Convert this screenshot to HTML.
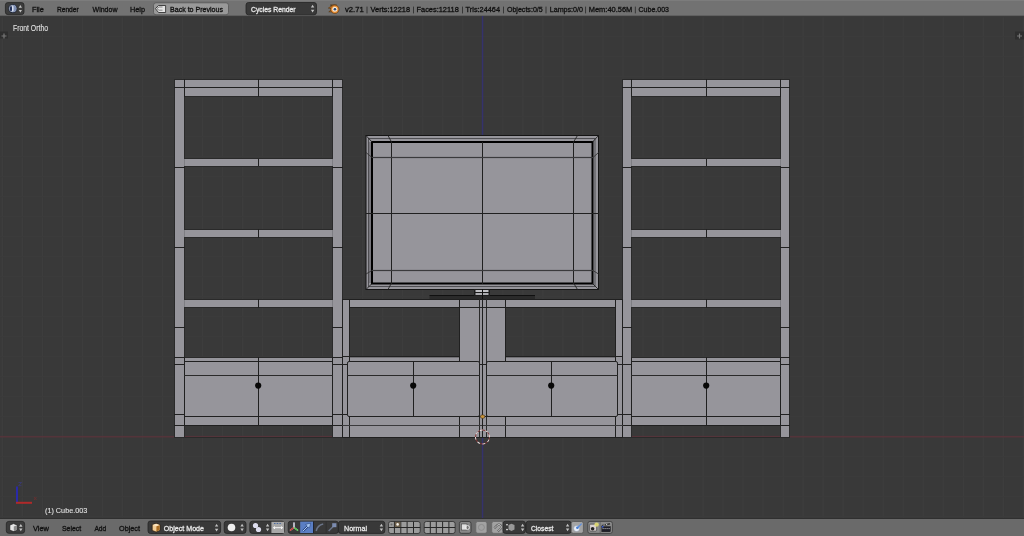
<!DOCTYPE html>
<html><head><meta charset="utf-8"><title>Blender</title>
<style>
html,body{margin:0;padding:0;background:#393939;}
body{width:1024px;height:536px;overflow:hidden;position:relative;}
svg{position:absolute;left:0;top:0;display:block;will-change:transform;}
text{font-family:"Liberation Sans",sans-serif;}
</style></head>
<body>
<svg width="1024" height="536" viewBox="0 0 1024 536">
<rect x="0" y="16" width="1024.00" height="503.00" fill="#393939" />
<rect x="1.62" y="16" width="1.40" height="503.00" fill="#3d3d3d" />
<rect x="21.64" y="16" width="1.40" height="503.00" fill="#3d3d3d" />
<rect x="41.66" y="16" width="1.40" height="503.00" fill="#3d3d3d" />
<rect x="61.68" y="16" width="1.40" height="503.00" fill="#3d3d3d" />
<rect x="81.7" y="16" width="1.40" height="503.00" fill="#3d3d3d" />
<rect x="101.72" y="16" width="1.40" height="503.00" fill="#3d3d3d" />
<rect x="121.74" y="16" width="1.40" height="503.00" fill="#3d3d3d" />
<rect x="141.76" y="16" width="1.40" height="503.00" fill="#3d3d3d" />
<rect x="161.78" y="16" width="1.40" height="503.00" fill="#3d3d3d" />
<rect x="181.8" y="16" width="1.40" height="503.00" fill="#3d3d3d" />
<rect x="201.82" y="16" width="1.40" height="503.00" fill="#3d3d3d" />
<rect x="221.84" y="16" width="1.40" height="503.00" fill="#3d3d3d" />
<rect x="241.86" y="16" width="1.40" height="503.00" fill="#3d3d3d" />
<rect x="261.88" y="16" width="1.40" height="503.00" fill="#3d3d3d" />
<rect x="281.9" y="16" width="1.40" height="503.00" fill="#3d3d3d" />
<rect x="301.92" y="16" width="1.40" height="503.00" fill="#3d3d3d" />
<rect x="321.94" y="16" width="1.40" height="503.00" fill="#3d3d3d" />
<rect x="341.96" y="16" width="1.40" height="503.00" fill="#3d3d3d" />
<rect x="361.98" y="16" width="1.40" height="503.00" fill="#3d3d3d" />
<rect x="382.0" y="16" width="1.40" height="503.00" fill="#3d3d3d" />
<rect x="402.02" y="16" width="1.40" height="503.00" fill="#3d3d3d" />
<rect x="422.04" y="16" width="1.40" height="503.00" fill="#3d3d3d" />
<rect x="442.06" y="16" width="1.40" height="503.00" fill="#3d3d3d" />
<rect x="462.08" y="16" width="1.40" height="503.00" fill="#3d3d3d" />
<rect x="502.12" y="16" width="1.40" height="503.00" fill="#3d3d3d" />
<rect x="522.14" y="16" width="1.40" height="503.00" fill="#3d3d3d" />
<rect x="542.16" y="16" width="1.40" height="503.00" fill="#3d3d3d" />
<rect x="562.18" y="16" width="1.40" height="503.00" fill="#3d3d3d" />
<rect x="582.2" y="16" width="1.40" height="503.00" fill="#3d3d3d" />
<rect x="602.22" y="16" width="1.40" height="503.00" fill="#3d3d3d" />
<rect x="622.24" y="16" width="1.40" height="503.00" fill="#3d3d3d" />
<rect x="642.26" y="16" width="1.40" height="503.00" fill="#3d3d3d" />
<rect x="662.28" y="16" width="1.40" height="503.00" fill="#3d3d3d" />
<rect x="682.3" y="16" width="1.40" height="503.00" fill="#3d3d3d" />
<rect x="702.32" y="16" width="1.40" height="503.00" fill="#3d3d3d" />
<rect x="722.34" y="16" width="1.40" height="503.00" fill="#3d3d3d" />
<rect x="742.36" y="16" width="1.40" height="503.00" fill="#3d3d3d" />
<rect x="762.38" y="16" width="1.40" height="503.00" fill="#3d3d3d" />
<rect x="782.4" y="16" width="1.40" height="503.00" fill="#3d3d3d" />
<rect x="802.42" y="16" width="1.40" height="503.00" fill="#3d3d3d" />
<rect x="822.44" y="16" width="1.40" height="503.00" fill="#3d3d3d" />
<rect x="842.46" y="16" width="1.40" height="503.00" fill="#3d3d3d" />
<rect x="862.48" y="16" width="1.40" height="503.00" fill="#3d3d3d" />
<rect x="882.5" y="16" width="1.40" height="503.00" fill="#3d3d3d" />
<rect x="902.52" y="16" width="1.40" height="503.00" fill="#3d3d3d" />
<rect x="922.54" y="16" width="1.40" height="503.00" fill="#3d3d3d" />
<rect x="942.56" y="16" width="1.40" height="503.00" fill="#3d3d3d" />
<rect x="962.58" y="16" width="1.40" height="503.00" fill="#3d3d3d" />
<rect x="982.6" y="16" width="1.40" height="503.00" fill="#3d3d3d" />
<rect x="1002.62" y="16" width="1.40" height="503.00" fill="#3d3d3d" />
<rect x="1022.64" y="16" width="1.40" height="503.00" fill="#3d3d3d" />
<rect x="0" y="516.0" width="1024.00" height="1.40" fill="#3b3b3b" />
<rect x="0" y="496.0" width="1024.00" height="1.40" fill="#3b3b3b" />
<rect x="0" y="476.0" width="1024.00" height="1.40" fill="#3b3b3b" />
<rect x="0" y="456.0" width="1024.00" height="1.40" fill="#3b3b3b" />
<rect x="0" y="416.0" width="1024.00" height="1.40" fill="#3b3b3b" />
<rect x="0" y="396.0" width="1024.00" height="1.40" fill="#3b3b3b" />
<rect x="0" y="376.0" width="1024.00" height="1.40" fill="#3b3b3b" />
<rect x="0" y="356.0" width="1024.00" height="1.40" fill="#3b3b3b" />
<rect x="0" y="336.0" width="1024.00" height="1.40" fill="#3b3b3b" />
<rect x="0" y="316.0" width="1024.00" height="1.40" fill="#3b3b3b" />
<rect x="0" y="296.0" width="1024.00" height="1.40" fill="#3b3b3b" />
<rect x="0" y="276.0" width="1024.00" height="1.40" fill="#3b3b3b" />
<rect x="0" y="256.0" width="1024.00" height="1.40" fill="#3b3b3b" />
<rect x="0" y="236.0" width="1024.00" height="1.40" fill="#3b3b3b" />
<rect x="0" y="216.0" width="1024.00" height="1.40" fill="#3b3b3b" />
<rect x="0" y="196.0" width="1024.00" height="1.40" fill="#3b3b3b" />
<rect x="0" y="176.0" width="1024.00" height="1.40" fill="#3b3b3b" />
<rect x="0" y="156.0" width="1024.00" height="1.40" fill="#3b3b3b" />
<rect x="0" y="136.0" width="1024.00" height="1.40" fill="#3b3b3b" />
<rect x="0" y="116.0" width="1024.00" height="1.40" fill="#3b3b3b" />
<rect x="0" y="96.0" width="1024.00" height="1.40" fill="#3b3b3b" />
<rect x="0" y="76.0" width="1024.00" height="1.40" fill="#3b3b3b" />
<rect x="0" y="56.0" width="1024.00" height="1.40" fill="#3b3b3b" />
<rect x="0" y="36.0" width="1024.00" height="1.40" fill="#3b3b3b" />
<rect x="0" y="16.0" width="1024.00" height="1.40" fill="#3b3b3b" />
<rect x="0" y="435.9" width="1024.00" height="1.60" fill="#54343a" />
<rect x="481.8" y="16" width="1.50" height="503.00" fill="#35326c" />
<rect x="174.5" y="79.5" width="10" height="358" fill="#96959b"/>
<rect x="332.5" y="79.5" width="10" height="358" fill="#96959b"/>
<rect x="184.5" y="79.5" width="148" height="17" fill="#96959b"/>
<rect x="184.5" y="158.5" width="148" height="8" fill="#96959b"/>
<rect x="184.5" y="229.5" width="148" height="8" fill="#96959b"/>
<rect x="184.5" y="299.5" width="148" height="8" fill="#96959b"/>
<rect x="184.5" y="357.5" width="148" height="68" fill="#96959b"/>
<rect x="174.0" y="79" width="1.0" height="359" fill="#2a2a2a"/>
<rect x="342.0" y="79" width="1.0" height="359" fill="#2a2a2a"/>
<rect x="184.0" y="96" width="1.0" height="63" fill="#2a2a2a"/>
<rect x="332.0" y="96" width="1.0" height="63" fill="#2a2a2a"/>
<rect x="184" y="96.0" width="149" height="1.0" fill="#2a2a2a"/>
<rect x="184" y="158.0" width="149" height="1.0" fill="#2a2a2a"/>
<rect x="184.0" y="166" width="1.0" height="64" fill="#2a2a2a"/>
<rect x="332.0" y="166" width="1.0" height="64" fill="#2a2a2a"/>
<rect x="184" y="166.0" width="149" height="1.0" fill="#2a2a2a"/>
<rect x="184" y="229.0" width="149" height="1.0" fill="#2a2a2a"/>
<rect x="184.0" y="237" width="1.0" height="63" fill="#2a2a2a"/>
<rect x="332.0" y="237" width="1.0" height="63" fill="#2a2a2a"/>
<rect x="184" y="237.0" width="149" height="1.0" fill="#2a2a2a"/>
<rect x="184" y="299.0" width="149" height="1.0" fill="#2a2a2a"/>
<rect x="184.0" y="307" width="1.0" height="51" fill="#2a2a2a"/>
<rect x="332.0" y="307" width="1.0" height="51" fill="#2a2a2a"/>
<rect x="184" y="307.0" width="149" height="1.0" fill="#2a2a2a"/>
<rect x="184" y="357.0" width="149" height="1.0" fill="#2a2a2a"/>
<rect x="184.0" y="425" width="1.0" height="13" fill="#2a2a2a"/>
<rect x="332.0" y="425" width="1.0" height="13" fill="#2a2a2a"/>
<rect x="184" y="425.0" width="149" height="1.0" fill="#2a2a2a"/>
<rect x="184" y="437.0" width="149" height="1.0" fill="#2a2a2a"/>
<rect x="174" y="79.0" width="169" height="1.0" fill="#2a2a2a"/>
<rect x="174" y="437.0" width="11" height="1.0" fill="#2a2a2a"/>
<rect x="332" y="437.0" width="11" height="1.0" fill="#2a2a2a"/>
<rect x="174" y="87.0" width="169" height="1.0" fill="#202020"/>
<rect x="184.0" y="79" width="1.0" height="18" fill="#202020"/>
<rect x="332.0" y="79" width="1.0" height="18" fill="#202020"/>
<rect x="258.0" y="79" width="1.0" height="18" fill="#202020"/>
<rect x="258.0" y="158" width="1.0" height="9" fill="#202020"/>
<rect x="258.0" y="229" width="1.0" height="9" fill="#202020"/>
<rect x="258.0" y="299" width="1.0" height="9" fill="#202020"/>
<rect x="184" y="158.0" width="149" height="1.0" fill="#2a2a2a"/>
<rect x="184" y="166.0" width="149" height="1.0" fill="#2a2a2a"/>
<rect x="184.0" y="357" width="1.0" height="69" fill="#202020"/>
<rect x="332.0" y="357" width="1.0" height="69" fill="#202020"/>
<rect x="184" y="361.0" width="149" height="1.0" fill="#202020"/>
<rect x="184" y="375.0" width="149" height="1.0" fill="#2a2a2a"/>
<rect x="184" y="416.0" width="149" height="1.0" fill="#202020"/>
<rect x="174" y="425.0" width="169" height="1.0" fill="#202020"/>
<rect x="258.0" y="357" width="1.0" height="69" fill="#202020"/>
<rect x="174" y="167.0" width="11" height="1.0" fill="#202020"/>
<rect x="332" y="167.0" width="11" height="1.0" fill="#202020"/>
<rect x="174" y="247.0" width="11" height="1.0" fill="#202020"/>
<rect x="332" y="247.0" width="11" height="1.0" fill="#202020"/>
<rect x="174" y="327.0" width="11" height="1.0" fill="#202020"/>
<rect x="332" y="327.0" width="11" height="1.0" fill="#202020"/>
<rect x="174" y="357.0" width="11" height="1.0" fill="#202020"/>
<rect x="332" y="357.0" width="11" height="1.0" fill="#202020"/>
<rect x="174" y="364.0" width="11" height="1.0" fill="#202020"/>
<rect x="332" y="364.0" width="11" height="1.0" fill="#202020"/>
<rect x="174" y="414.0" width="11" height="1.0" fill="#202020"/>
<rect x="332" y="414.0" width="11" height="1.0" fill="#202020"/>
<circle cx="258.2" cy="385.6" r="3.1" fill="#080808"/>
<rect x="622.5" y="79.5" width="9" height="358" fill="#96959b"/>
<rect x="780.5" y="79.5" width="9" height="358" fill="#96959b"/>
<rect x="631.5" y="79.5" width="149" height="17" fill="#96959b"/>
<rect x="631.5" y="158.5" width="149" height="8" fill="#96959b"/>
<rect x="631.5" y="229.5" width="149" height="8" fill="#96959b"/>
<rect x="631.5" y="299.5" width="149" height="8" fill="#96959b"/>
<rect x="631.5" y="357.5" width="149" height="68" fill="#96959b"/>
<rect x="622.0" y="79" width="1.0" height="359" fill="#2a2a2a"/>
<rect x="789.0" y="79" width="1.0" height="359" fill="#2a2a2a"/>
<rect x="631.0" y="96" width="1.0" height="63" fill="#2a2a2a"/>
<rect x="780.0" y="96" width="1.0" height="63" fill="#2a2a2a"/>
<rect x="631" y="96.0" width="150" height="1.0" fill="#2a2a2a"/>
<rect x="631" y="158.0" width="150" height="1.0" fill="#2a2a2a"/>
<rect x="631.0" y="166" width="1.0" height="64" fill="#2a2a2a"/>
<rect x="780.0" y="166" width="1.0" height="64" fill="#2a2a2a"/>
<rect x="631" y="166.0" width="150" height="1.0" fill="#2a2a2a"/>
<rect x="631" y="229.0" width="150" height="1.0" fill="#2a2a2a"/>
<rect x="631.0" y="237" width="1.0" height="63" fill="#2a2a2a"/>
<rect x="780.0" y="237" width="1.0" height="63" fill="#2a2a2a"/>
<rect x="631" y="237.0" width="150" height="1.0" fill="#2a2a2a"/>
<rect x="631" y="299.0" width="150" height="1.0" fill="#2a2a2a"/>
<rect x="631.0" y="307" width="1.0" height="51" fill="#2a2a2a"/>
<rect x="780.0" y="307" width="1.0" height="51" fill="#2a2a2a"/>
<rect x="631" y="307.0" width="150" height="1.0" fill="#2a2a2a"/>
<rect x="631" y="357.0" width="150" height="1.0" fill="#2a2a2a"/>
<rect x="631.0" y="425" width="1.0" height="13" fill="#2a2a2a"/>
<rect x="780.0" y="425" width="1.0" height="13" fill="#2a2a2a"/>
<rect x="631" y="425.0" width="150" height="1.0" fill="#2a2a2a"/>
<rect x="631" y="437.0" width="150" height="1.0" fill="#2a2a2a"/>
<rect x="622" y="79.0" width="168" height="1.0" fill="#2a2a2a"/>
<rect x="622" y="437.0" width="10" height="1.0" fill="#2a2a2a"/>
<rect x="780" y="437.0" width="10" height="1.0" fill="#2a2a2a"/>
<rect x="622" y="87.0" width="168" height="1.0" fill="#202020"/>
<rect x="631.0" y="79" width="1.0" height="18" fill="#202020"/>
<rect x="780.0" y="79" width="1.0" height="18" fill="#202020"/>
<rect x="706.0" y="79" width="1.0" height="18" fill="#202020"/>
<rect x="706.0" y="158" width="1.0" height="9" fill="#202020"/>
<rect x="706.0" y="229" width="1.0" height="9" fill="#202020"/>
<rect x="706.0" y="299" width="1.0" height="9" fill="#202020"/>
<rect x="631" y="158.0" width="150" height="1.0" fill="#2a2a2a"/>
<rect x="631" y="166.0" width="150" height="1.0" fill="#2a2a2a"/>
<rect x="631.0" y="357" width="1.0" height="69" fill="#202020"/>
<rect x="780.0" y="357" width="1.0" height="69" fill="#202020"/>
<rect x="631" y="361.0" width="150" height="1.0" fill="#202020"/>
<rect x="631" y="375.0" width="150" height="1.0" fill="#2a2a2a"/>
<rect x="631" y="416.0" width="150" height="1.0" fill="#202020"/>
<rect x="622" y="425.0" width="168" height="1.0" fill="#202020"/>
<rect x="706.0" y="357" width="1.0" height="69" fill="#202020"/>
<rect x="622" y="167.0" width="10" height="1.0" fill="#202020"/>
<rect x="780" y="167.0" width="10" height="1.0" fill="#202020"/>
<rect x="622" y="247.0" width="10" height="1.0" fill="#202020"/>
<rect x="780" y="247.0" width="10" height="1.0" fill="#202020"/>
<rect x="622" y="327.0" width="10" height="1.0" fill="#202020"/>
<rect x="780" y="327.0" width="10" height="1.0" fill="#202020"/>
<rect x="780" y="357.0" width="10" height="1.0" fill="#202020"/>
<rect x="622" y="364.0" width="10" height="1.0" fill="#202020"/>
<rect x="780" y="364.0" width="10" height="1.0" fill="#202020"/>
<rect x="622" y="414.0" width="10" height="1.0" fill="#202020"/>
<rect x="780" y="414.0" width="10" height="1.0" fill="#202020"/>
<circle cx="706.2" cy="385.6" r="3.1" fill="#080808"/>
<rect x="342.5" y="299.5" width="280" height="138" fill="#96959b"/>
<rect x="349.5" y="307.5" width="110" height="49" fill="#393939"/>
<rect x="361.98" y="308" width="1.40" height="49.00" fill="#3d3d3d" />
<rect x="382.0" y="308" width="1.40" height="49.00" fill="#3d3d3d" />
<rect x="402.02" y="308" width="1.40" height="49.00" fill="#3d3d3d" />
<rect x="422.04" y="308" width="1.40" height="49.00" fill="#3d3d3d" />
<rect x="442.06" y="308" width="1.40" height="49.00" fill="#3d3d3d" />
<rect x="350" y="356.0" width="110.00" height="1.40" fill="#3b3b3b" />
<rect x="350" y="336.0" width="110.00" height="1.40" fill="#3b3b3b" />
<rect x="350" y="316.0" width="110.00" height="1.40" fill="#3b3b3b" />
<rect x="505.5" y="307.5" width="110" height="49" fill="#393939"/>
<rect x="522.14" y="308" width="1.40" height="49.00" fill="#3d3d3d" />
<rect x="542.16" y="308" width="1.40" height="49.00" fill="#3d3d3d" />
<rect x="562.18" y="308" width="1.40" height="49.00" fill="#3d3d3d" />
<rect x="582.2" y="308" width="1.40" height="49.00" fill="#3d3d3d" />
<rect x="602.22" y="308" width="1.40" height="49.00" fill="#3d3d3d" />
<rect x="506" y="356.0" width="110.00" height="1.40" fill="#3b3b3b" />
<rect x="506" y="336.0" width="110.00" height="1.40" fill="#3b3b3b" />
<rect x="506" y="316.0" width="110.00" height="1.40" fill="#3b3b3b" />
<rect x="342.0" y="299" width="1.0" height="139" fill="#202020"/>
<rect x="622.0" y="299" width="1.0" height="139" fill="#202020"/>
<rect x="342" y="299.0" width="281" height="1.0" fill="#202020"/>
<rect x="349" y="307.0" width="111" height="1.0" fill="#202020"/>
<rect x="349" y="356.0" width="111" height="1.0" fill="#202020"/>
<rect x="349.0" y="299" width="1.0" height="63" fill="#202020"/>
<rect x="459.0" y="299" width="1.0" height="63" fill="#202020"/>
<rect x="349.0" y="416" width="1.0" height="22" fill="#202020"/>
<rect x="459.0" y="416" width="1.0" height="22" fill="#202020"/>
<rect x="505" y="307.0" width="111" height="1.0" fill="#202020"/>
<rect x="505" y="356.0" width="111" height="1.0" fill="#202020"/>
<rect x="505.0" y="299" width="1.0" height="63" fill="#202020"/>
<rect x="615.0" y="299" width="1.0" height="63" fill="#202020"/>
<rect x="505.0" y="416" width="1.0" height="22" fill="#202020"/>
<rect x="615.0" y="416" width="1.0" height="22" fill="#202020"/>
<rect x="479.0" y="299" width="1.0" height="139" fill="#2a2a2a"/>
<rect x="486.0" y="299" width="1.0" height="139" fill="#2a2a2a"/>
<rect x="482.0" y="299" width="1.0" height="139" fill="#202020"/>
<rect x="459" y="307.0" width="47" height="1.0" fill="#202020"/>
<rect x="342" y="356.0" width="8" height="1.0" fill="#202020"/>
<rect x="615" y="356.0" width="8" height="1.0" fill="#202020"/>
<rect x="342" y="364.0" width="8" height="1.0" fill="#202020"/>
<rect x="615" y="364.0" width="8" height="1.0" fill="#202020"/>
<rect x="342" y="414.0" width="8" height="1.0" fill="#202020"/>
<rect x="615" y="414.0" width="8" height="1.0" fill="#202020"/>
<rect x="479" y="364.0" width="8" height="1.0" fill="#202020"/>
<rect x="342" y="425.0" width="281" height="1.0" fill="#3a3a3c"/>
<rect x="342" y="437.0" width="281" height="1.0" fill="#202020"/>
<rect x="347.5" y="361.5" width="132" height="55" rx="1.6" fill="#96959b" stroke="#202020" stroke-width="1"/>
<rect x="347" y="375.0" width="133" height="1.0" fill="#2a2a2a"/>
<rect x="413.0" y="361" width="1.0" height="56" fill="#202020"/>
<circle cx="413.2" cy="385.6" r="3.1" fill="#080808"/>
<rect x="486.5" y="361.5" width="131" height="55" rx="1.6" fill="#96959b" stroke="#202020" stroke-width="1"/>
<rect x="486" y="375.0" width="132" height="1.0" fill="#2a2a2a"/>
<rect x="551.0" y="361" width="1.0" height="56" fill="#202020"/>
<circle cx="551.2" cy="385.6" r="3.1" fill="#080808"/>
<rect x="349" y="416.0" width="267" height="1.0" fill="#202020"/>
<rect x="482.0" y="361" width="1.0" height="77" fill="#202020"/>
<rect x="366" y="135.5" width="232.50" height="154.00" fill="#96959b" />
<rect x="368.5" y="142" width="3" height="141" fill="#77767c"/>
<rect x="366" y="135.5" width="232.5" height="154" fill="none" stroke="#151515" stroke-width="1"/>
<rect x="368.5" y="138.5" width="226.5" height="148" fill="none" stroke="#48484c" stroke-width="0.9"/>
<rect x="372" y="142" width="220.5" height="141.5" fill="none" stroke="#000" stroke-width="2"/>
<line x1="366" y1="135.5" x2="372" y2="142" stroke="#222" stroke-width="0.9"/>
<line x1="598.5" y1="135.5" x2="592.5" y2="142" stroke="#222" stroke-width="0.9"/>
<line x1="366" y1="289.5" x2="372" y2="283.5" stroke="#222" stroke-width="0.9"/>
<line x1="598.5" y1="289.5" x2="592.5" y2="283.5" stroke="#222" stroke-width="0.9"/>
<rect x="391.0" y="142" width="1.0" height="142" fill="#202020"/>
<rect x="482.0" y="142" width="1.0" height="142" fill="#202020"/>
<rect x="573.0" y="142" width="1.0" height="142" fill="#202020"/>
<path d="M388 135.5L391.5 142M577.5 135.5L573.5 142M388 289.5L391.5 283M577.5 289.5L573.5 283" stroke="#222" stroke-width="0.9"/>
<rect x="372" y="156.9" width="221" height="1.2" fill="#3a3a3c"/>
<rect x="366" y="213.0" width="233" height="1.0" fill="#202020"/>
<rect x="372" y="269.9" width="221" height="1.2" fill="#3a3a3c"/>
<path d="M366 152.5L372 157.5M598.5 152.5L593 157.5M366 274L372 270.5M598.5 274L593 270.5" stroke="#333" stroke-width="0.9"/>
<rect x="429.5" y="295" width="105.50" height="1.00" fill="#101010" />
<rect x="429.5" y="296" width="105.50" height="3.00" fill="#2a2a2a" />
<rect x="474" y="289" width="16.00" height="7.00" fill="#1c1c1c" />
<rect x="475.5" y="290" width="13.00" height="2.00" fill="#c0c0c4" />
<rect x="475.5" y="293" width="13.00" height="2.00" fill="#acacb0" />
<rect x="482" y="289" width="1.00" height="10.00" fill="#101010" />
<ellipse cx="482.6" cy="416.6" rx="2.3" ry="1.8" fill="#c8943c" stroke="#2a1a08" stroke-width="0.5"/>
<circle cx="482.5" cy="437" r="7" fill="none" stroke="#8a3030" stroke-width="0.9"/>
<circle cx="482.5" cy="437" r="7" fill="none" stroke="#e8e8e8" stroke-width="0.9" stroke-dasharray="2.75 2.75" transform="rotate(22 482.5 437)"/>
<rect x="16" y="486.5" width="2.00" height="16.50" fill="#2a2aa8" />
<path d="M18.5 482.5h3l-3 3.2h3" stroke="#3a3a78" stroke-width="0.8" fill="none"/>
<path d="M34 497l2.5 3M36.5 497l-2.5 3" stroke="#6a3030" stroke-width="0.9" fill="none"/>
<rect x="16" y="501.8" width="16.00" height="2.00" fill="#b02a2a" />
<rect x="0" y="31.5" width="8" height="7" fill="#2e2e2e"/>
<path d="M4 33.5v5M1.5 36h5" stroke="#777" stroke-width="1.2"/>
<rect x="1015" y="31.5" width="9" height="8" fill="#2e2e2e"/>
<path d="M1019.5 33.5v5M1017 36h5" stroke="#777" stroke-width="1.2"/>
<text x="13" y="30.6" font-size="8.2" fill="#e4e4e4" stroke="#e4e4e4" stroke-width="0.08" textLength="35" lengthAdjust="spacingAndGlyphs" font-weight="normal" text-anchor="start">Front Ortho</text>
<text x="45" y="513.2" font-size="7.7" fill="#e4e4e4" stroke="#e4e4e4" stroke-width="0.08" textLength="42.3" lengthAdjust="spacingAndGlyphs" font-weight="normal" text-anchor="start">(1) Cube.003</text>
<rect x="0" y="0" width="1024.00" height="16.00" fill="#727272" />
<rect x="0" y="0" width="1024.00" height="1.00" fill="#7c7c7c" />
<rect x="0" y="15.3" width="1024.00" height="0.70" fill="#5a5a5a" />
<rect x="5.4" y="2.6" width="18.6" height="12.0" rx="2.5" fill="#3c3c3c" stroke="#262626" stroke-width="0.8"/>
<circle cx="12.8" cy="8.6" r="4.1" fill="#a8b4cc" stroke="#1c2232" stroke-width="0.9"/>
<path d="M16.4 8.6a3.6 3.6 0 0 1 -3.2 3.6v-7.2a3.6 3.6 0 0 1 3.2 3.6z" fill="#7f8fb4"/>
<ellipse cx="11.0" cy="8.7" rx="1.1" ry="2.6" fill="#22305a"/>
<rect x="12.3" y="6.2" width="1.1" height="5" fill="#f0f4ff"/>
<path d="M18.7 7.7L20.35 5.1L22 7.7ZM18.7 9.9L20.35 12.5L22 9.9Z" fill="#c4c4c4"/>
<text x="31.9" y="11.9" font-size="7.4" fill="#101010" stroke="#101010" stroke-width="0.3" textLength="11.85" lengthAdjust="spacingAndGlyphs" font-weight="normal" text-anchor="start">File</text>
<text x="56.9" y="11.9" font-size="7.4" fill="#101010" stroke="#101010" stroke-width="0.3" textLength="21.85" lengthAdjust="spacingAndGlyphs" font-weight="normal" text-anchor="start">Render</text>
<text x="92.5" y="11.9" font-size="7.4" fill="#101010" stroke="#101010" stroke-width="0.3" textLength="25" lengthAdjust="spacingAndGlyphs" font-weight="normal" text-anchor="start">Window</text>
<text x="130" y="11.9" font-size="7.4" fill="#101010" stroke="#101010" stroke-width="0.3" textLength="15" lengthAdjust="spacingAndGlyphs" font-weight="normal" text-anchor="start">Help</text>
<rect x="153.5" y="2.8" width="75.0" height="12.0" rx="2.5" fill="#999999" stroke="#555" stroke-width="0.8"/>
<path d="M155.4 8.6l3.2-3.1h7v7h-7z" fill="#e4e4e4" stroke="#222" stroke-width="0.8"/>
<path d="M156.8 8.6l2.2-1.6h3.5M156.8 8.6l2.2 1.6h3.5" stroke="#444" stroke-width="0.6" fill="none"/>
<text x="170" y="11.9" font-size="7.4" fill="#101010" stroke="#101010" stroke-width="0.3" textLength="53" lengthAdjust="spacingAndGlyphs" font-weight="normal" text-anchor="start">Back to Previous</text>
<rect x="246" y="2.5" width="70.5" height="12.3" rx="2.5" fill="#393939" stroke="#252525" stroke-width="0.8"/>
<text x="251" y="11.9" font-size="7.4" fill="#e8e8e8" stroke="#e8e8e8" stroke-width="0.3" textLength="44.6" lengthAdjust="spacingAndGlyphs" font-weight="normal" text-anchor="start">Cycles Render</text>
<path d="M310.90 7.55L312.60 4.85L314.30 7.55ZM310.90 9.75L312.60 12.45L314.30 9.75Z" fill="#c4c4c4"/>
<g transform="translate(334.8 9.3)"><path d="M-6.4 -1.2L-2.5 -3.8L-4.5 -4.2L-0.5 -4.6L2 -4.2L-2 -0.5z M-6 2.5L-2.5 0L-1 2.5z" fill="#d9822b" stroke="#3a2000" stroke-width="0.5"/><circle cx="0" cy="0" r="4.2" fill="#e89038" stroke="#4a2a08" stroke-width="0.6"/><circle cx="0" cy="0" r="2.5" fill="#f4e8d8"/><circle cx="0.1" cy="0" r="1.3" fill="#2a4a78"/></g>
<text x="345" y="11.9" font-size="7.4" fill="#101010" stroke="#101010" stroke-width="0.3" textLength="18.75" lengthAdjust="spacingAndGlyphs" font-weight="normal" text-anchor="start">v2.71</text>
<rect x="366.55" y="6.6" width="0.90" height="6.80" fill="#303030" />
<text x="370.6" y="11.9" font-size="7.4" fill="#101010" stroke="#101010" stroke-width="0.3" textLength="39.4" lengthAdjust="spacingAndGlyphs" font-weight="normal" text-anchor="start">Verts:12218</text>
<rect x="413.05" y="6.6" width="0.90" height="6.80" fill="#303030" />
<text x="416.5" y="11.9" font-size="7.4" fill="#101010" stroke="#101010" stroke-width="0.3" textLength="42.25" lengthAdjust="spacingAndGlyphs" font-weight="normal" text-anchor="start">Faces:12118</text>
<rect x="462.05" y="6.6" width="0.90" height="6.80" fill="#303030" />
<text x="465.6" y="11.9" font-size="7.4" fill="#101010" stroke="#101010" stroke-width="0.3" textLength="34.4" lengthAdjust="spacingAndGlyphs" font-weight="normal" text-anchor="start">Tris:24464</text>
<rect x="503.05" y="6.6" width="0.90" height="6.80" fill="#303030" />
<text x="506.9" y="11.9" font-size="7.4" fill="#101010" stroke="#101010" stroke-width="0.3" textLength="35.85" lengthAdjust="spacingAndGlyphs" font-weight="normal" text-anchor="start">Objects:0/5</text>
<rect x="545.55" y="6.6" width="0.90" height="6.80" fill="#303030" />
<text x="549.75" y="11.9" font-size="7.4" fill="#101010" stroke="#101010" stroke-width="0.3" textLength="33.25" lengthAdjust="spacingAndGlyphs" font-weight="normal" text-anchor="start">Lamps:0/0</text>
<rect x="585.15" y="6.6" width="0.90" height="6.80" fill="#303030" />
<text x="588.75" y="11.9" font-size="7.4" fill="#101010" stroke="#101010" stroke-width="0.3" textLength="43.5" lengthAdjust="spacingAndGlyphs" font-weight="normal" text-anchor="start">Mem:40.56M</text>
<rect x="634.85" y="6.6" width="0.90" height="6.80" fill="#303030" />
<text x="638.5" y="11.9" font-size="7.4" fill="#101010" stroke="#101010" stroke-width="0.3" textLength="30.5" lengthAdjust="spacingAndGlyphs" font-weight="normal" text-anchor="start">Cube.003</text>
<rect x="0" y="519" width="1024.00" height="17.00" fill="#6a6a6a" />
<rect x="0" y="518" width="1024.00" height="1.00" fill="#303030" />
<rect x="6.3" y="521.4" width="18.3" height="11.899999999999977" rx="2.5" fill="#3c3c3c" stroke="#262626" stroke-width="0.8"/>
<path d="M9.8 525L13.5 523.6L17.3 525V530.2L13.5 531.5L9.8 530.2Z" fill="#e6e6e6" stroke="#151515" stroke-width="0.7"/>
<path d="M13.8 526.4L17 525.3V530L13.8 531.1Z" fill="#8c8c8c"/>
<path d="M19.1 526.7L20.8 523.9L22.5 526.7ZM19.1 528.5L20.8 531.3L22.5 528.5Z" fill="#c4c4c4"/>
<text x="33" y="530.8" font-size="7.4" fill="#101010" stroke="#101010" stroke-width="0.3" textLength="16" lengthAdjust="spacingAndGlyphs" font-weight="normal" text-anchor="start">View</text>
<text x="61.9" y="530.8" font-size="7.4" fill="#101010" stroke="#101010" stroke-width="0.3" textLength="19.35" lengthAdjust="spacingAndGlyphs" font-weight="normal" text-anchor="start">Select</text>
<text x="94.4" y="530.8" font-size="7.4" fill="#101010" stroke="#101010" stroke-width="0.3" textLength="11.85" lengthAdjust="spacingAndGlyphs" font-weight="normal" text-anchor="start">Add</text>
<text x="119" y="530.8" font-size="7.4" fill="#101010" stroke="#101010" stroke-width="0.3" textLength="21" lengthAdjust="spacingAndGlyphs" font-weight="normal" text-anchor="start">Object</text>
<rect x="148" y="521" width="72.6" height="12.5" rx="2.5" fill="#393939" stroke="#252525" stroke-width="0.8"/>
<path d="M152.2 524.8L156.1 523.4L160 524.8V530.4L156.1 532L152.2 530.4Z" fill="#f2cc94" stroke="#2a1a08" stroke-width="0.7"/>
<path d="M156.4 526.2L159.6 525.1V530.1L156.4 531.5Z" fill="#a86c24"/>
<path d="M152.6 525L156.1 523.8L159.6 525L156.1 526.2Z" fill="#fae4c0"/>
<text x="163.75" y="530.8" font-size="7.4" fill="#e8e8e8" stroke="#e8e8e8" stroke-width="0.3" textLength="40.25" lengthAdjust="spacingAndGlyphs" font-weight="normal" text-anchor="start">Object Mode</text>
<path d="M214.90 526.60L216.60 523.90L218.30 526.60ZM214.90 528.80L216.60 531.50L218.30 528.80Z" fill="#c4c4c4"/>
<rect x="224.2" y="521.2" width="21.80000000000001" height="12.199999999999932" rx="2.5" fill="#393939" stroke="#252525" stroke-width="0.8"/>
<circle cx="231.5" cy="527.5" r="3.8" fill="#eee"/>
<path d="M240.40 526.40L242.10 523.70L243.80 526.40ZM240.40 528.60L242.10 531.30L243.80 528.60Z" fill="#c4c4c4"/>
<rect x="249.8" y="521.2" width="34.69999999999999" height="12.199999999999932" rx="2.5" fill="#393939" stroke="#252525" stroke-width="0.8"/>
<circle cx="255.5" cy="525.5" r="2.6" fill="#dde"/><circle cx="258.5" cy="529.5" r="2.6" fill="#dde"/>
<path d="M265.90 526.40L267.60 523.70L269.30 526.40ZM265.90 528.60L267.60 531.30L269.30 528.60Z" fill="#c4c4c4"/>
<rect x="271.4" y="521.8" width="12.80" height="11.20" fill="#a8a8a8" />
<path d="M273.5 527.7h9M273.5 527.7l1.5-1.2M273.5 527.7l1.5 1.2M282.5 527.7l-1.5-1.2M282.5 527.7l-1.5 1.2" stroke="#fff" stroke-width="0.9" fill="none"/>
<path d="M274 523.5h8" stroke="#4a6aa0" stroke-width="1.2" stroke-dasharray="1.5 1.2"/>
<rect x="288.2" y="521.2" width="50.19999999999999" height="12.199999999999932" rx="2.5" fill="#393939" stroke="#252525" stroke-width="0.8"/>
<rect x="300.2" y="521.6" width="12.80" height="11.40" fill="#5a7ec4" />
<rect x="313" y="521.6" width="0.80" height="11.40" fill="#1a2030" />
<rect x="325.8" y="521.6" width="0.60" height="11.40" fill="#2a2a2a" />
<path d="M294 527.5v-5M294 527.5l-4 3M294 527.5l4 3" stroke-width="1.2" fill="none" stroke="#ddd"/>
<path d="M294 527.5l-4 3" stroke="#c33" stroke-width="1.2"/><path d="M294 527.5l4 3" stroke="#4c4" stroke-width="1.2"/><path d="M294 527.5v-5" stroke="#ccd" stroke-width="1.2"/>
<path d="M303 531L307.8 526.2" stroke="#2a4680" stroke-width="2.2" fill="none"/><path d="M310.6 523.2L305.6 524.4L309.4 528.2Z" fill="#a8c8f4" stroke="#2a4680" stroke-width="0.6"/><path d="M303 531L307.8 526.2" stroke="#a8c8f4" stroke-width="1" fill="none"/>
<path d="M316.2 531c0.8-3.8 3-6.2 7-7" stroke="#6a7488" stroke-width="1.5" fill="none"/>
<path d="M328.6 531l4.6-4.6" stroke="#6a7488" stroke-width="1.4" fill="none"/><rect x="332.2" y="523.2" width="4.2" height="4" fill="#7c8cb0"/>
<rect x="338.4" y="521.2" width="46.400000000000034" height="12.199999999999932" rx="2.5" fill="#393939" stroke="#252525" stroke-width="0.8"/>
<text x="344" y="530.8" font-size="7.4" fill="#e8e8e8" stroke="#e8e8e8" stroke-width="0.3" textLength="23" lengthAdjust="spacingAndGlyphs" font-weight="normal" text-anchor="start">Normal</text>
<path d="M379.70 526.40L381.40 523.70L383.10 526.40ZM379.70 528.60L381.40 531.30L383.10 528.60Z" fill="#c4c4c4"/>
<rect x="388.6" y="521.5" width="31.599999999999966" height="12.0" rx="2.2" fill="#9c9c9c" stroke="#2a2a2a" stroke-width="0.8"/>
<rect x="393.9" y="521.6" width="1.00" height="11.80" fill="#262626" />
<rect x="400.3" y="521.6" width="1.00" height="11.80" fill="#262626" />
<rect x="406.6" y="521.6" width="1.00" height="11.80" fill="#262626" />
<rect x="413.0" y="521.6" width="1.00" height="11.80" fill="#262626" />
<rect x="388.6" y="527.0" width="31.60" height="1.00" fill="#262626" />
<rect x="424.2" y="521.5" width="30.900000000000034" height="12.0" rx="2.2" fill="#9c9c9c" stroke="#2a2a2a" stroke-width="0.8"/>
<rect x="429.8" y="521.6" width="1.00" height="11.80" fill="#262626" />
<rect x="435.8" y="521.6" width="1.00" height="11.80" fill="#262626" />
<rect x="442.1" y="521.6" width="1.00" height="11.80" fill="#262626" />
<rect x="448.4" y="521.6" width="1.00" height="11.80" fill="#262626" />
<rect x="424.2" y="527.0" width="30.90" height="1.00" fill="#262626" />
<rect x="394.9" y="522" width="5.40" height="4.90" fill="#6a5c48" />
<circle cx="397.6" cy="524.4" r="1.3" fill="#f4f0e8"/>
<circle cx="391.5" cy="524.4" r="1" fill="#6a6a6a"/>
<rect x="459.4" y="521.5" width="11.600000000000023" height="11.799999999999955" rx="2" fill="#888" stroke="#333" stroke-width="0.8"/>
<rect x="461.5" y="524" width="5.5" height="6" fill="#e0e0e0" stroke="#333" stroke-width="0.5"/><circle cx="467.5" cy="527.5" r="2" fill="none" stroke="#eee" stroke-width="0.8"/>
<rect x="475.8" y="521.5" width="11.199999999999989" height="11.799999999999955" rx="2" fill="#a2a2a2" stroke="#666" stroke-width="0.8"/>
<circle cx="481.4" cy="527.4" r="3" fill="none" stroke="#888" stroke-width="0.8"/>
<rect x="491.7" y="521.5" width="11.300000000000011" height="11.799999999999955" rx="2" fill="#a2a2a2" stroke="#666" stroke-width="0.8"/>
<path d="M494.3 528.2L497.2 525.3A2.4 2.4 0 0 1 500.6 528.7L497.7 531.6" stroke="#555" stroke-width="2" fill="none"/>
<path d="M494.3 528.2L497.2 525.3A2.4 2.4 0 0 1 500.6 528.7L497.7 531.6" stroke="#d8d8d8" stroke-width="0.9" fill="none"/>
<rect x="503" y="521.2" width="22.399999999999977" height="12.199999999999932" rx="2.5" fill="#393939" stroke="#252525" stroke-width="0.8"/>
<path d="M508.5 525l3-1.2 3 1.2v4.5l-3 1.4-3-1.4z" fill="#999"/><circle cx="507" cy="524.8" r="0.8" fill="#fff"/><circle cx="507" cy="529.6" r="0.8" fill="#fff"/>
<path d="M520.90 526.40L522.60 523.70L524.30 526.40ZM520.90 528.60L522.60 531.30L524.30 528.60Z" fill="#c4c4c4"/>
<rect x="526" y="521.2" width="45.200000000000045" height="12.199999999999932" rx="2.5" fill="#393939" stroke="#252525" stroke-width="0.8"/>
<text x="531" y="530.8" font-size="7.4" fill="#e8e8e8" stroke="#e8e8e8" stroke-width="0.3" textLength="22.4" lengthAdjust="spacingAndGlyphs" font-weight="normal" text-anchor="start">Closest</text>
<path d="M565.90 526.40L567.60 523.70L569.30 526.40ZM565.90 528.60L567.60 531.30L569.30 528.60Z" fill="#c4c4c4"/>
<rect x="571.2" y="521.5" width="12.199999999999932" height="11.799999999999955" rx="2" fill="#a4a4a4" stroke="#555" stroke-width="0.8"/>
<circle cx="576.6" cy="528.6" r="3" fill="#e8eef8" stroke="#7a8698" stroke-width="0.4"/><path d="M577 528.2l4.6-4.6" stroke="#5a8ee0" stroke-width="1.3"/><circle cx="577.4" cy="527.8" r="1.3" fill="#4a7ed0"/>
<rect x="587.8" y="521.4" width="24.600000000000023" height="12.0" rx="2.2" fill="#8a8a8a" stroke="#3a3a3a" stroke-width="0.8"/>
<rect x="599.8" y="521.8" width="0.60" height="11.20" fill="#555" />
<rect x="589.6" y="524.2" width="7" height="6.8" rx="1" fill="#d8d0d0" stroke="#222" stroke-width="0.5"/><circle cx="592.6" cy="528.8" r="1.8" fill="#222"/><circle cx="596.6" cy="524.6" r="2.2" fill="#e8e070" fill-opacity="0.85"/>
<rect x="601.8" y="526.6" width="8.6" height="5.2" fill="#1e1e28" stroke="#111" stroke-width="0.4"/><path d="M602.6 528.6h7.2" stroke="#ddd" stroke-dasharray="1 1" stroke-width="0.9"/><path d="M601.8 525.8l8.2-2" stroke="#333" stroke-width="1.4"/><path d="M603.5 525.3l1.2-0.3M606 524.7l1.2-0.3" stroke="#ddd" stroke-width="0.9"/><circle cx="602.6" cy="526.8" r="1" fill="#3a5ac8"/>
</svg>
</body></html>
